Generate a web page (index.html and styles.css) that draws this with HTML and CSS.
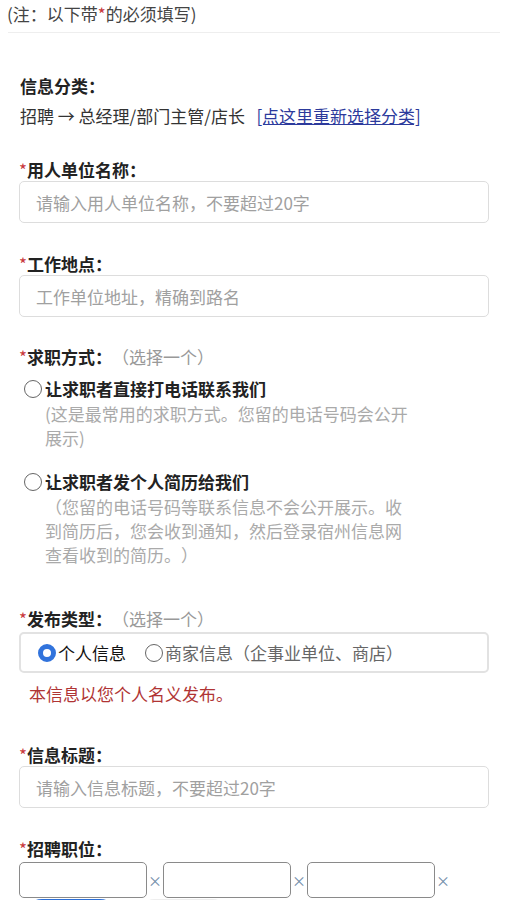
FILE: index.html
```html
<!DOCTYPE html>
<html>
	<head>
		<title>发布信息</title>
		<meta http-equiv="Content-Type" content="text/html; charset=UTF-8">
		<meta name="viewport" content="width=device-width, initial-scale=1">
		<link rel="stylesheet" href="styles.css">
	</head>

	<body>
		<div class="note">(注：以下带<span class="req">*</span>的必须填写)</div>
		<div class="divider"></div>

		<div class="form">
			<div class="category">
				<div class="label">信息分类：</div>
				<div class="cat-value">招聘 → 总经理/部门主管/店长 &nbsp;&nbsp;<a href="#" class="relink">[点这里重新选择分类]</a></div>
			</div>

			<div class="field f-company">
				<div class="label"><span class="req">*</span>用人单位名称：</div>
				<input class="txt" type="text" placeholder="请输入用人单位名称，不要超过20字">
			</div>

			<div class="field f-place">
				<div class="label"><span class="req">*</span>工作地点：</div>
				<input class="txt" type="text" placeholder="工作单位地址，精确到路名">
			</div>

			<div class="field f-contact">
				<div class="label"><span class="req">*</span>求职方式：<span class="hint">（选择一个）</span></div>
				<div class="option opt-first">
					<span class="radio"></span><span class="opt-title">让求职者直接打电话联系我们</span>
				</div>
				<div class="desc">(这是最常用的求职方式。您留的电话号码会公开展示)</div>
				<div class="option opt-second">
					<span class="radio"></span><span class="opt-title">让求职者发个人简历给我们</span>
				</div>
				<div class="desc">（您留的电话号码等联系信息不会公开展示。收到简历后，您会收到通知，然后登录宿州信息网查看收到的简历。）</div>
			</div>

			<div class="field f-type">
				<div class="label"><span class="req">*</span>发布类型：<span class="hint">（选择一个）</span></div>
				<div class="type-box">
					<span class="radio checked"></span><span class="type-on">个人信息</span>
					<span class="radio"></span><span class="type-off">商家信息（企事业单位、商店）</span>
				</div>
				<div class="warn">本信息以您个人名义发布。</div>
			</div>

			<div class="field f-title">
				<div class="label"><span class="req">*</span>信息标题：</div>
				<input class="txt" type="text" placeholder="请输入信息标题，不要超过20字">
			</div>

			<div class="field f-jobs">
				<div class="label"><span class="req">*</span>招聘职位：</div>
				<div class="jobs">
					<input class="job" type="text"><span class="del">×</span>
					<input class="job" type="text"><span class="del">×</span>
					<input class="job" type="text"><span class="del">×</span>
				</div>
				<div class="btns">
					<button class="btn-add"></button>
					<button class="btn-clear"></button>
				</div>
			</div>
		</div>
	</body>
</html>
```
FILE: styles.css
```css
body {
	margin: 0;
	font-family: "Noto Sans CJK SC", "Noto Sans", sans-serif;
	font-size: 17px;
	line-height: 22px;
	color: #333;
	background: #fff;
	text-spacing-trim: space-all;
}

.req {
	color: #c8383c;
	font-weight: normal;
}

.note {
	padding: 3px 7px 0 7px;
	color: #444;
}

.divider {
	margin: 7px 7px 0 8px;
	border-top: 1px solid #eee;
}

.form {
	padding: 0 18px 0 19px;
}

.label {
	font-weight: bold;
	color: #222;
	height: 22px;
}

.hint {
	font-weight: normal;
	color: #999;
}

.category {
	margin-top: 42px;
	padding-left: 1px;
}

.cat-value {
	margin-top: 8px;
	color: #333;
}

.relink {
	color: #2c3a9c;
	text-decoration: underline;
}

.f-company { margin-top: 32px; }
.f-place   { margin-top: 30px; }
.f-contact { margin-top: 29px; }
.f-type    { margin-top: 41px; }
.f-title   { margin-top: 39px; }
.f-jobs    { margin-top: 30px; }

.txt {
	display: block;
	box-sizing: border-box;
	width: 100%;
	height: 42px;
	margin: 0;
	padding: 0 16px;
	border: 1.5px solid #ddd;
	border-radius: 5px;
	font-family: inherit;
	font-size: 17px;
	color: #333;
	background: #fff;
}

.txt::placeholder {
	color: #a0a0a0;
}

.option {
	display: flex;
	align-items: center;
	padding-left: 5px;
	height: 22px;
}

.opt-first  { margin-top: 10px; }
.opt-second { margin-top: 21px; }

.opt-title {
	font-weight: bold;
	color: #222;
	margin-left: 3px;
}

.radio {
	display: inline-block;
	box-sizing: border-box;
	width: 18px;
	height: 18px;
	border: 1.5px solid #666;
	border-radius: 50%;
	flex: none;
}

.radio.checked {
	border: 5px solid #3173dc;
	background: #fff;
}

.desc {
	margin-top: 2px;
	padding-left: 26px;
	width: 365px;
	line-height: 24px;
	color: #aaa;
}

.type-box {
	display: flex;
	align-items: center;
	box-sizing: border-box;
	height: 41px;
	margin-top: 2px;
	padding-left: 17px;
	border: 2px solid #e2e2e2;
	border-radius: 5px;
}

.type-on {
	margin-left: 2px;
	margin-right: 19px;
	color: #111;
}

.type-off {
	margin-left: 2px;
	color: #666;
}

.warn {
	margin-top: 10px;
	padding-left: 10px;
	color: #b03434;
}

.jobs {
	display: flex;
	align-items: center;
	margin-top: 2px;
}

.job {
	box-sizing: border-box;
	width: 128px;
	height: 36px;
	margin: 0;
	border: 1.5px solid #8a8a8a;
	border-radius: 5px;
	background: #fff;
}

.del {
	width: 16px;
	text-align: center;
	font-size: 14px;
	color: #6f8ea8;
}

.btns {
	display: flex;
	margin-top: 1px;
	padding-left: 5px;
}

button {
	border: none;
	height: 36px;
	border-radius: 18px;
	padding: 0;
}

.btn-add {
	width: 94px;
	background: #2b6fd8;
}

.btn-clear {
	width: 93px;
	margin-left: 19px;
	background: #eeeeee;
}
```
